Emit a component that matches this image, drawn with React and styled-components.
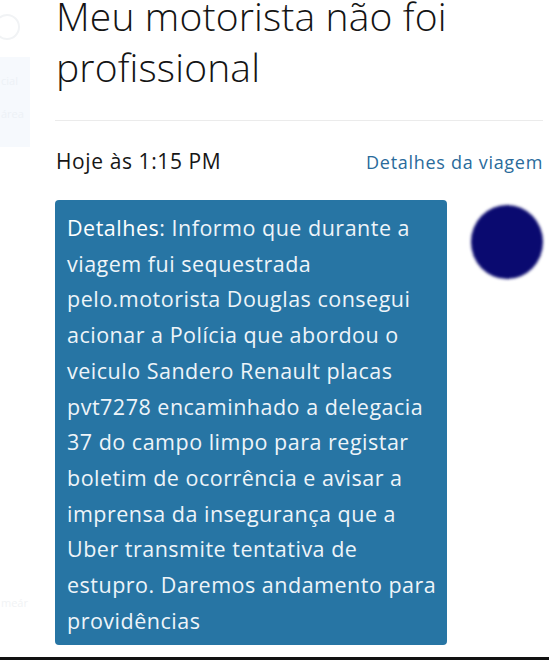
import React from "react";
import styled, { createGlobalStyle } from "styled-components";

const Global = createGlobalStyle`
  html, body { margin: 0; padding: 0; background: #ffffff; }
  body { font-family: "Open Sans", "Noto Sans", sans-serif; overflow: hidden; }
`;

const Page = styled.div`
  width: 549px;
  height: 660px;
  display: flex;
  flex-direction: column;
  overflow: hidden;
`;

const Body = styled.div`
  flex: 1;
  display: flex;
  min-height: 0;
`;

const Sidebar = styled.aside`
  width: 30px;
  display: flex;
  flex-direction: column;
  overflow: hidden;
`;

const GhostIcon = styled.div`
  margin: 14px 0 0 -6px;
  width: 22px;
  height: 22px;
  border-radius: 50%;
  border: 2px solid #f1f3f5;
`;

const GhostPanel = styled.div`
  margin-top: 17px;
  height: 90px;
  background: #f6f9fd;
  display: flex;
  flex-direction: column;
  gap: 18px;
  padding-top: 16px;
  box-sizing: border-box;
`;

const GhostText = styled.span`
  font-size: 11px;
  color: ${(p) => p.$c || "#edf1f6"};
  white-space: nowrap;
  margin-left: 1px;
  margin-top: ${(p) => p.$mt || "0"};
`;

const Main = styled.main`
  flex: 1;
  padding: 0 6px 0 25px;
  display: flex;
  flex-direction: column;
`;

const Title = styled.h1`
  margin: -10px 0 0 1px;
  font-size: 39px;
  font-weight: 300;
  line-height: 51px;
  color: #141414;
  letter-spacing: 0.15px;
`;

const Divider = styled.hr`
  margin: 28px 0 0 0;
  border: none;
  height: 1px;
  background: #ebebeb;
`;

const MetaRow = styled.div`
  margin-top: 26px;
  display: flex;
  justify-content: space-between;
  align-items: baseline;
`;

const Time = styled.span`
  font-size: 21px;
  letter-spacing: 0.6px;
  color: #161616;
  margin-left: 1px;
`;

const TripLink = styled.a`
  font-size: 18px;
  letter-spacing: 0.7px;
  color: #2a6b9b;
  text-decoration: none;
  margin-right: 0;
`;

const MessageRow = styled.div`
  margin-top: 25px;
  display: flex;
  align-items: flex-start;
`;

const Bubble = styled.div`
  width: 392px;
  box-sizing: border-box;
  background: #2775a4;
  border-radius: 4px;
  padding: 10px 10px 7px 12px;
  color: #eef4f9;
  font-size: 21.5px;
  letter-spacing: 0.5px;
  line-height: 35.7px;
`;

const Line = styled.div`
  white-space: nowrap;
`;

const Label = styled.span`
  font-weight: 500;
  color: #ffffff;
`;

const Avatar = styled.div`
  margin: 5px 0 0 24px;
  width: 72px;
  height: 74px;
  border-radius: 50%;
  background: #0a0a70;
  filter: blur(1.5px);
`;

const BottomBar = styled.div`
  height: 3px;
  background: #111111;
`;

const lines = [
  "viagem fui sequestrada",
  "pelo.motorista Douglas consegui",
  "acionar a Polícia que abordou o",
  "veiculo Sandero Renault placas",
  "pvt7278 encaminhado a delegacia",
  "37 do campo limpo para registar",
  "boletim de ocorrência e avisar a",
  "imprensa da insegurança que a",
  "Uber transmite tentativa de",
  "estupro. Daremos andamento para",
  "providências",
];

export default function App() {
  return (
    <>
      <Global />
      <Page>
        <Body>
          <Sidebar>
            <GhostIcon />
            <GhostPanel>
              <GhostText>cial</GhostText>
              <GhostText>área</GhostText>
            </GhostPanel>
            <GhostText $mt="448px" $c="#f1f3f5">meár</GhostText>
          </Sidebar>
          <Main>
            <Title>
              Meu motorista não foi
              <br />
              profissional
            </Title>
            <Divider />
            <MetaRow>
              <Time>Hoje às 1:15 PM</Time>
              <TripLink href="#">Detalhes da viagem</TripLink>
            </MetaRow>
            <MessageRow>
              <Bubble>
                <Line>
                  <Label>Detalhes</Label>: Informo que durante a
                </Line>
                {lines.map((l) => (
                  <Line key={l}>{l}</Line>
                ))}
              </Bubble>
              <Avatar />
            </MessageRow>
          </Main>
        </Body>
        <BottomBar />
      </Page>
    </>
  );
}
